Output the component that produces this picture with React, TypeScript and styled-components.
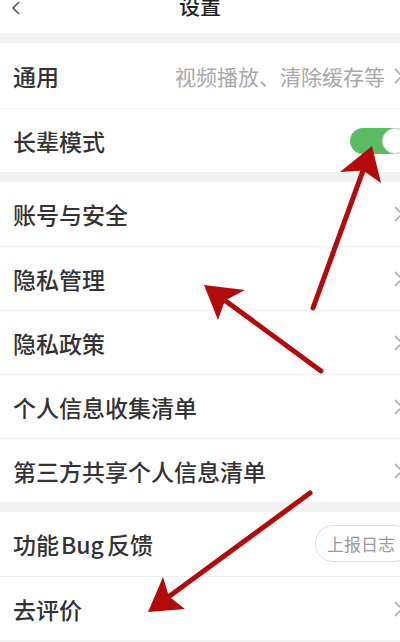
import React from "react";
import styled, { createGlobalStyle } from "styled-components";

const GlobalStyle = createGlobalStyle`
  html, body {
    margin: 0;
    padding: 0;
    background: #f2f2f2;
  }
  body {
    font-family: "Noto Sans CJK SC", "Noto Sans", sans-serif;
    overflow: hidden;
  }
  * {
    box-sizing: border-box;
  }
`;

const Page = styled.div`
  position: relative;
  width: 400px;
  height: 642px;
  overflow: hidden;
  background: #f2f2f2;
`;

const Header = styled.div`
  height: 33px;
  background: #fff;
  position: relative;
  display: flex;
  justify-content: center;
`;

const Title = styled.div`
  font-size: 21px;
  font-weight: 500;
  color: #222;
  line-height: 22px;
  margin-top: -6px;
`;

const Back = styled.svg`
  position: absolute;
  left: 9px;
  top: 1px;
`;

const Group = styled.div`
  background: #fff;
  margin-top: 10px;
`;

const Row = styled.div<{ $h?: number }>`
  height: ${(p) => p.$h || 64}px;
  display: flex;
  align-items: center;
  padding-left: 13px;
  position: relative;
  & + & {
    border-top: 1px solid #efefef;
  }
`;

const Label = styled.div`
  flex: 1;
  font-size: 23px;
  font-weight: 500;
  color: #333;
  white-space: nowrap;
`;

const Latin = styled.span`
  margin: 0 3px 0 2px;
`;

const Hint = styled.div`
  font-size: 21px;
  color: #a8a8a8;
  margin-right: 6px;
  white-space: nowrap;
`;

const Chevron = styled.svg`
  flex: none;
  margin-right: -7px;
`;

const Toggle = styled.div`
  width: 58px;
  height: 26px;
  border-radius: 13px;
  background: #5bbd63;
  margin-right: -8px;
  position: relative;
  flex: none;
`;

const Knob = styled.div`
  position: absolute;
  right: 0;
  top: 0;
  width: 26px;
  height: 26px;
  border-radius: 50%;
  background: #fff;
  border: 1px solid #d8d8d8;
`;

const Pill = styled.div`
  flex: none;
  height: 37px;
  padding: 0 16px 0 11px;
  border: 1px solid #dcdcdc;
  border-radius: 18px;
  font-size: 17px;
  color: #9a9a9a;
  display: flex;
  align-items: center;
  margin-right: -12px;
  margin-top: -2px;
`;

const Arrows = styled.svg`
  position: absolute;
  left: 0;
  top: 0;
  pointer-events: none;
`;

const Arrow = ({ from, to, w1, w2 }: { from: number[]; to: number[]; w1: number[]; w2: number[] }) => {
  // shaft + arrowhead
  const dx = to[0] - from[0];
  const dy = to[1] - from[1];
  const len = Math.hypot(dx, dy);
  const bx = to[0] - (dx / len) * 26;
  const by = to[1] - (dy / len) * 26;
  return (
    <g>
      <line x1={from[0]} y1={from[1]} x2={bx} y2={by} stroke="#b30b0b" strokeWidth={5} strokeLinecap="round" />
      <polygon
        points={`${to[0]},${to[1]} ${w1[0]},${w1[1]} ${bx},${by} ${w2[0]},${w2[1]}`}
        fill="#b30b0b"
      />
    </g>
  );
};

const ChevronIcon = () => (
  <Chevron width="16" height="20" viewBox="0 0 16 20">
    <path d="M4 3 L11 10 L4 17" fill="none" stroke="#b5b5b5" strokeWidth="1.8" />
  </Chevron>
);

export default function App() {
  const items = ["账号与安全", "隐私管理", "隐私政策", "个人信息收集清单", "第三方共享个人信息清单"];
  return (
    <Page>
      <GlobalStyle />
      <Header>
        <Back width="14" height="16" viewBox="0 0 14 16">
          <path d="M10 1 L4 7 L10 13" fill="none" stroke="#555" strokeWidth="1.6" />
        </Back>
        <Title>设置</Title>
      </Header>
      <Group>
        <Row $h={65}>
          <Label>通用</Label>
          <Hint>视频播放、清除缓存等</Hint>
          <ChevronIcon />
        </Row>
        <Row>
          <Label>长辈模式</Label>
          <Toggle>
            <Knob />
          </Toggle>
        </Row>
      </Group>
      <Group>
        {items.map((t) => (
          <Row key={t}>
            <Label>{t}</Label>
            <ChevronIcon />
          </Row>
        ))}
      </Group>
      <Group>
        <Row>
          <Label>
            功能<Latin>Bug</Latin>反馈
          </Label>
          <Pill>上报日志</Pill>
        </Row>
        <Row>
          <Label>去评价</Label>
          <ChevronIcon />
        </Row>
      </Group>
      <Arrows width="400" height="642" viewBox="0 0 400 642">
        <Arrow from={[313, 308]} to={[372, 146]} w1={[340, 172]} w2={[381, 183]} />
        <Arrow from={[321, 371]} to={[204, 285]} w1={[245, 290]} w2={[218, 320]} />
        <Arrow from={[310, 493]} to={[148, 612]} w1={[163, 577]} w2={[185, 609]} />
      </Arrows>
    </Page>
  );
}
